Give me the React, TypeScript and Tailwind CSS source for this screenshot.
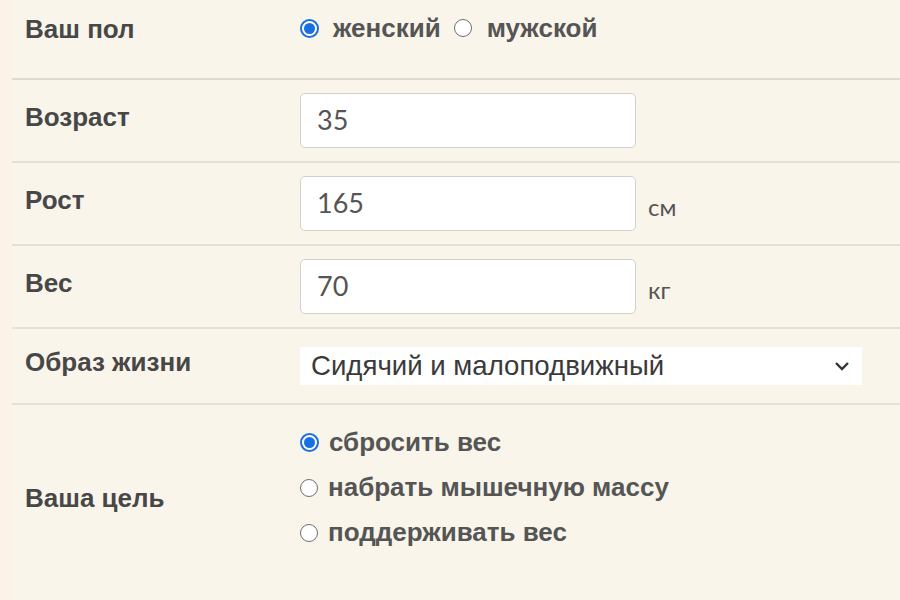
import React from "react";

const Radio = ({ checked }: { checked?: boolean }) => {
  if (checked) {
    return (
      <span className="inline-flex h-[19px] w-[19px] shrink-0 items-center justify-center rounded-full border-2 border-[#1a6fe0] bg-white">
        <span className="h-[11px] w-[11px] rounded-full bg-[#1a6fe0]" />
      </span>
    );
  }
  return (
    <span className="inline-block h-[18px] w-[18px] shrink-0 rounded-full border border-[#6f6f6f] bg-white" />
  );
};

const Label = ({ children }: { children: React.ReactNode }) => (
  <div className="w-[288px] shrink-0 pl-[13px] pb-2 text-[26px] font-bold leading-[30px] text-[#474747]">
    {children}
  </div>
);

const NumberInput = ({ value, unit }: { value: string; unit?: string }) => (
  <div className="flex items-center">
    <div className="flex h-[55px] w-[336px] items-center rounded-[5px] border border-[#d2d0c8] bg-white pl-[16px] font-['Lato','Open_Sans',sans-serif] text-[27px] text-[#555]">
      {value}
    </div>
    {unit && (
      <span className="ml-[12px] mt-[6px] font-['Lato','Open_Sans',sans-serif] text-[24px] text-[#555]">
        {unit}
      </span>
    )}
  </div>
);

export default function App() {
  return (
    <div className="h-[600px] w-[900px] overflow-hidden bg-[#fbf2e8] font-['Liberation_Sans',Arial,sans-serif]">
      <div className="ml-[12px] h-full bg-[#f9f5ea]">
        {/* пол */}
        <div className="flex h-[80px] items-start border-b-2 border-[#dedad0] pt-[14px]">
          <Label>Ваш пол</Label>
          <div className="flex items-center text-[26px] font-bold leading-[28px] text-[#555]">
            <Radio checked />
            <span className="ml-[14px]">женский</span>
            <span className="ml-[13px]">
              <Radio />
            </span>
            <span className="ml-[15px]">мужской</span>
          </div>
        </div>

        <div className="flex h-[83px] items-center border-b-2 border-[#e4e0d6]">
          <Label>Возраст</Label>
          <NumberInput value="35" />
        </div>

        <div className="flex h-[83px] items-center border-b-2 border-[#e4e0d6]">
          <Label>Рост</Label>
          <NumberInput value="165" unit="см" />
        </div>

        <div className="flex h-[83px] items-center border-b-2 border-[#e4e0d6]">
          <Label>Вес</Label>
          <NumberInput value="70" unit="кг" />
        </div>

        <div className="flex h-[76px] items-center border-b-2 border-[#e4e0d6]">
          <Label>Образ жизни</Label>
          <div className="flex h-[38px] w-[562px] items-center justify-between bg-white pl-[11px] pr-[12px] text-[27.6px] text-[#3a3a3a]">
            <span>Сидячий и малоподвижный</span>
            <svg width="16" height="10" viewBox="0 0 16 10" fill="none">
              <path d="M2 2l6 6 6-6" stroke="#333" strokeWidth="2.4" />
            </svg>
          </div>
        </div>

        {/* цель */}
        <div className="flex items-start pt-[15px]">
          <div className="mt-[63px]">
            <Label>Ваша цель</Label>
          </div>
          <div className="flex flex-col text-[26px] font-bold text-[#555]">
            {[
              { t: "сбросить вес", c: true },
              { t: "набрать мышечную массу" },
              { t: "поддерживать вес" },
            ].map((o) => (
              <div key={o.t} className="flex h-[45px] items-center gap-[10px]">
                <Radio checked={o.c} />
                <span>{o.t}</span>
              </div>
            ))}
          </div>
        </div>
      </div>
    </div>
  );
}
